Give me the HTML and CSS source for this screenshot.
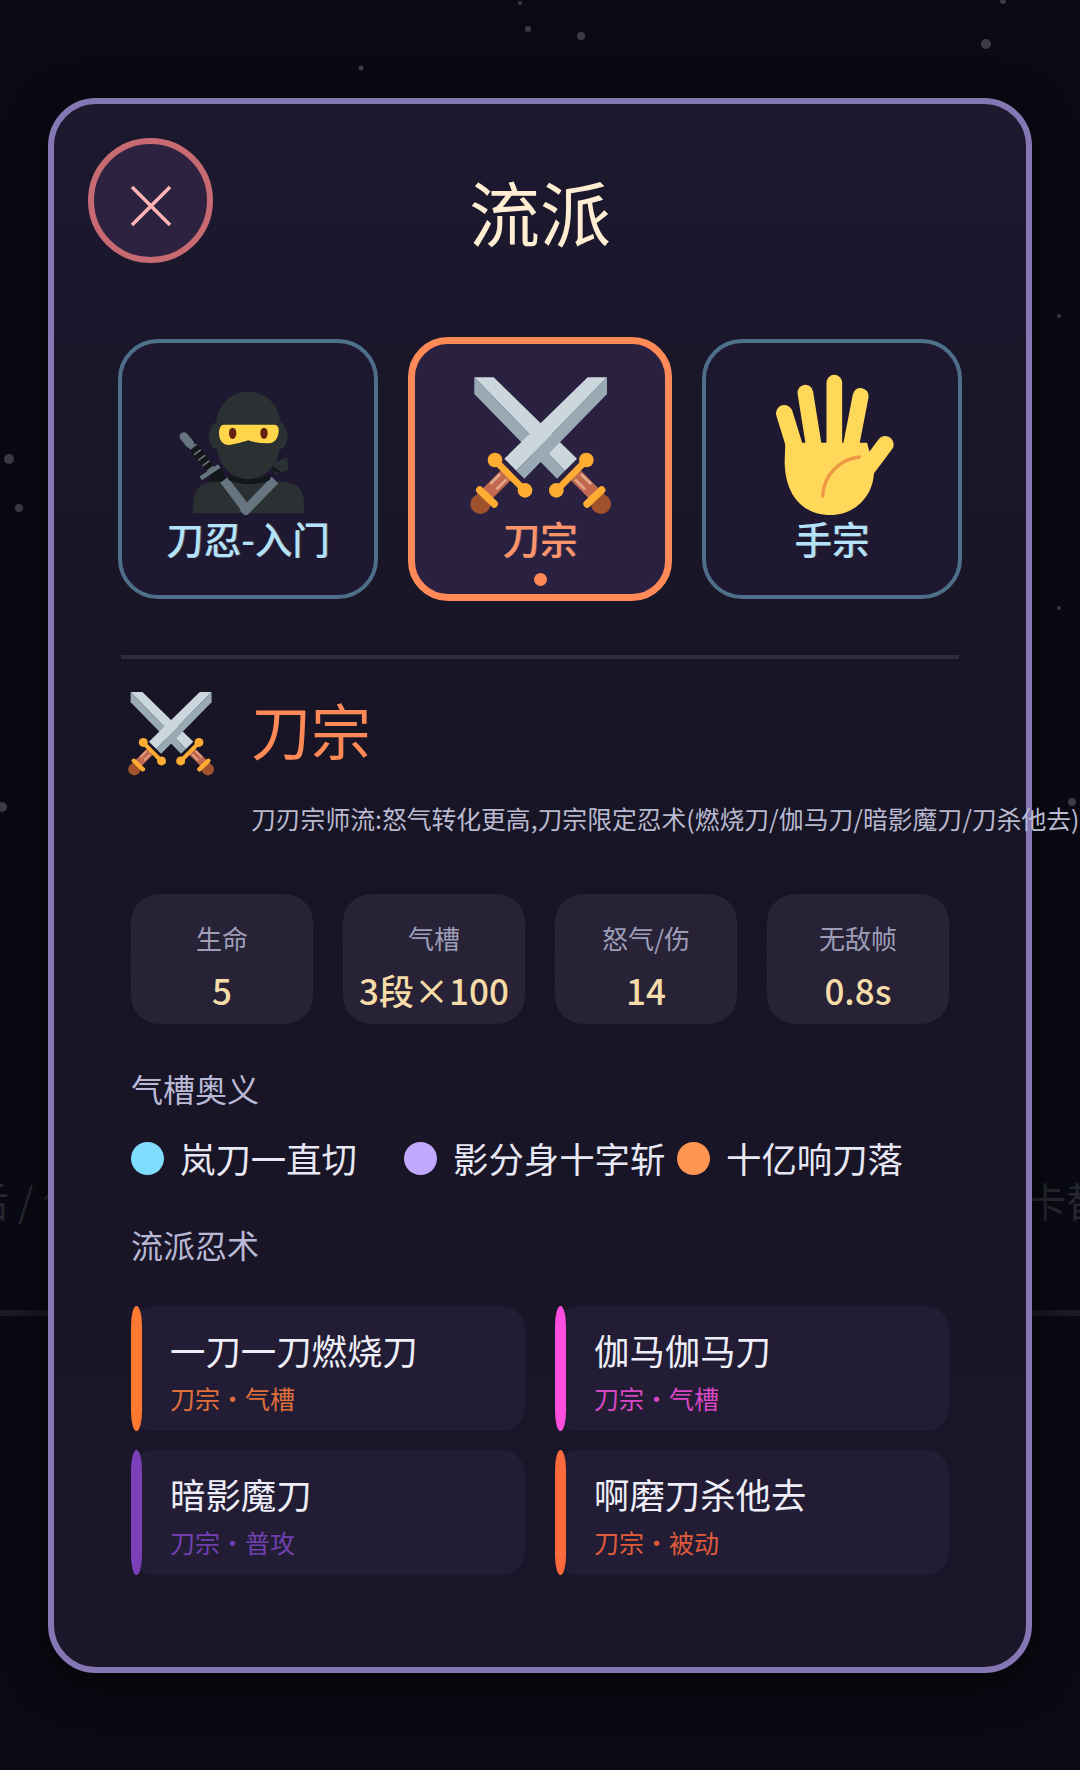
FILE: index.html
```html
<!DOCTYPE html>
<html lang="zh-CN">
<head>
    <meta charset="UTF-8">
    <meta name="viewport" content="width=device-width, initial-scale=1.0">
    <title>流派</title>
    <link rel="stylesheet" href="styles.css">
</head>
<body>
    <svg class="defs" width="0" height="0">
        <symbol id="swords" viewBox="57 42 423 423">
            <g id="sword">
                <path d="M70 52H128L378 296L342 332Z" fill="#ccd6dd"/>
                <path d="M70 52V102L318 356L342 332Z" fill="#99aab5"/>
                <path d="M366 338L446 418" stroke="#c1694f" stroke-width="42"/>
                <path d="M390 342L420 372M372 358L402 388" stroke="#e3a78c" stroke-width="8"/>
                <circle cx="450" cy="432" r="30" fill="#a0522d"/>
                <path d="M408 432L452 390" stroke="#ffac33" stroke-width="22" stroke-linecap="round"/>
                <path d="M318 390L405 302" stroke="#ffac33" stroke-width="20"/>
                <circle cx="316" cy="391" r="22" fill="#ffac33"/>
                <circle cx="406" cy="300" r="22" fill="#ffac33"/>
            </g>
            <use href="#sword" transform="translate(538 0) scale(-1 1)"/>
        </symbol>
    </svg>

    <svg class="stars" viewBox="0 0 1080 1770">
        <circle cx="520" cy="3" r="2"/>
        <circle cx="528" cy="29" r="3"/>
        <circle cx="581" cy="36" r="4"/>
        <circle cx="986" cy="44" r="5"/>
        <circle cx="1003" cy="1" r="3"/>
        <circle cx="361" cy="68" r="2.5"/>
        <circle cx="9" cy="459" r="5"/>
        <circle cx="19" cy="508" r="4"/>
        <circle cx="2" cy="807" r="5"/>
        <circle cx="1059" cy="316" r="2"/>
        <circle cx="1059" cy="608" r="2"/>
        <circle cx="1072" cy="802" r="4"/>
    </svg>

    <div class="ghost">
        <span class="ghost-left">后 / 气</span>
        <span>卡替</span>
    </div>
    <div class="ghost-line"></div>

    <section class="panel">
        <header class="panel-head">
            <button class="close">
                <svg width="44" height="44" viewBox="0 0 44 44">
                    <path d="M3 3L41 41M41 3L3 41" stroke="#ffb3b3" stroke-width="3.5" fill="none"/>
                </svg>
            </button>
            <h1>流派</h1>
        </header>

        <div class="tabs">
            <div class="tab">
                <svg class="tab-icon" viewBox="54 -18 423 423">
                    <path d="M90 188L168 288" stroke="#14171a" stroke-width="28"/>
                    <path d="M98 198L160 278" stroke="#66757f" stroke-width="26" stroke-dasharray="5 16"/>
                    <path d="M72 170L90 192" stroke="#66757f" stroke-width="26" stroke-linecap="round"/>
                    <path d="M122 295L178 258" stroke="#66757f" stroke-width="13"/>
                    <path d="M150 290L185 262L200 310L150 312Z" fill="#14171a"/>
                    <path d="M100 400V368Q100 305 170 305H362Q432 305 432 368V400Z" fill="#2b3033"/>
                    <path d="M192 300L262 392M345 300L248 400" stroke="#66757f" stroke-width="28"/>
                    <path d="M205 285Q265 310 330 285V300Q265 325 205 300Z" fill="#14171a"/>
                    <path d="M340 248L382 232L385 270L345 285Z" fill="#2b3033"/>
                    <path d="M335 262L360 278" stroke="#14171a" stroke-width="8"/>
                    <path d="M265 35C315 35 358 72 360 125C378 135 385 160 382 180C378 198 368 208 358 208C352 262 312 297 265 297C218 297 178 262 172 208C162 208 152 198 148 180C145 160 152 135 170 125C172 72 215 35 265 35Z" fill="#2b3033"/>
                    <path d="M192 134H342Q358 134 356 155Q352 190 322 190Q290 190 265 181Q240 190 208 195Q178 195 177 160Q177 134 192 134Z" fill="#ffd54a"/>
                    <ellipse cx="218" cy="160" rx="11" ry="17" fill="#662113"/>
                    <ellipse cx="312" cy="160" rx="11" ry="17" fill="#662113"/>
                </svg>
                <span class="tab-name">刀忍-入门</span>
            </div>
            <div class="tab active">
                <svg class="tab-icon"><use href="#swords"/></svg>
                <span class="tab-name">刀宗</span>
                <i class="tab-dot"></i>
            </div>
            <div class="tab">
                <svg class="tab-icon" viewBox="30 39 423 423">
                    <g stroke="#ffd85a" stroke-linecap="round" fill="none">
                        <path d="M97 157L132 270" stroke-width="50"/>
                        <path d="M160 95L188 270" stroke-width="47"/>
                        <path d="M247 65V270" stroke-width="47"/>
                        <path d="M326 105L294 270" stroke-width="48"/>
                        <path d="M400 250L340 330" stroke-width="50"/>
                    </g>
                    <path d="M100 245H345L366 320C370 400 312 462 235 462C150 462 98 400 98 300Z" fill="#ffd85a"/>
                    <path d="M212 405C215 345 260 295 322 288" stroke="#ef9645" stroke-width="10" stroke-linecap="round" fill="none"/>
                </svg>
                <span class="tab-name">手宗</span>
            </div>
        </div>

        <hr class="divider">

        <div class="detail">
            <div class="detail-head">
                <svg class="detail-icon"><use href="#swords"/></svg>
                <div class="detail-text">
                    <h2>刀宗</h2>
                    <p>刀刃宗师流:怒气转化更高,刀宗限定忍术(燃烧刀/伽马刀/暗影魔刀/刀杀他去)</p>
                </div>
            </div>

            <div class="stats">
                <div class="stat"><span class="stat-label">生命</span><span class="stat-value">5</span></div>
                <div class="stat"><span class="stat-label">气槽</span><span class="stat-value">3段×100</span></div>
                <div class="stat"><span class="stat-label">怒气/伤</span><span class="stat-value">14</span></div>
                <div class="stat"><span class="stat-label">无敌帧</span><span class="stat-value">0.8s</span></div>
            </div>

            <h3 class="section-title">气槽奥义</h3>
            <div class="arts">
                <div class="art"><i class="orb orb-blue"></i>岚刀一直切</div>
                <div class="art"><i class="orb orb-purple"></i>影分身十字斩</div>
                <div class="art"><i class="orb orb-orange"></i>十亿响刀落</div>
            </div>

            <h3 class="section-title skills-title">流派忍术</h3>
            <div class="skills">
                <div class="skill skill-orange">
                    <div class="skill-name">一刀一刀燃烧刀</div>
                    <div class="skill-tag">刀宗·气槽</div>
                </div>
                <div class="skill skill-pink">
                    <div class="skill-name">伽马伽马刀</div>
                    <div class="skill-tag">刀宗·气槽</div>
                </div>
                <div class="skill skill-violet">
                    <div class="skill-name">暗影魔刀</div>
                    <div class="skill-tag">刀宗·普攻</div>
                </div>
                <div class="skill skill-red">
                    <div class="skill-name">啊磨刀杀他去</div>
                    <div class="skill-tag">刀宗·被动</div>
                </div>
            </div>
        </div>
    </section>
</body>
</html>
```

FILE: styles.css
```css
* {
    box-sizing: border-box;
}

html, body {
    height: 100%;
}

body {
    margin: 0;
    padding-top: 98px;
    position: relative;
    overflow: hidden;
    background-color: #0a0a14;
    font-family: "Noto Sans CJK SC", "Noto Sans", sans-serif;
}

.defs {
    position: absolute;
}

.stars {
    position: absolute;
    top: 0;
    left: 0;
    width: 1080px;
    height: 1770px;
    fill: #3c3c46;
}

.ghost {
    position: absolute;
    top: 1175px;
    left: -31px;
    right: -26px;
    display: flex;
    justify-content: space-between;
    font-size: 40px;
    line-height: 50px;
    color: rgba(255, 255, 255, 0.12);
}

.ghost-left {
    white-space: pre;
}

.ghost-line {
    position: absolute;
    top: 1310px;
    left: 0;
    right: 0;
    height: 6px;
    background-color: #1b1a25;
}

.panel {
    position: relative;
    height: 1575px;
    margin: 0 48px;
    padding: 34px;
    background: linear-gradient(180deg, #1c182e, #171424 50%, #1b172b);
    border: 6px solid #8577b3;
    border-radius: 48px;
    box-shadow: 0 10px 40px rgba(0, 0, 0, 0.7);
}

/* header */
.panel-head {
    display: grid;
    grid-template-columns: 125px 1fr 125px;
    height: 125px;
}

.close {
    display: flex;
    align-items: center;
    justify-content: center;
    width: 125px;
    height: 125px;
    padding: 10px 0 0;
    background-color: #2d2340;
    border: 6px solid #c76a72;
    border-radius: 50%;
}

.panel-head h1 {
    grid-column: 2;
    margin: 0;
    font-size: 71px;
    font-weight: 400;
    line-height: 144px;
    text-align: center;
    color: #ffeed2;
}

/* tabs */
.tabs {
    display: flex;
    align-items: center;
    gap: 30px;
    margin: 76px 30px 0;
}

.tab {
    position: relative;
    display: flex;
    flex-direction: column;
    align-items: center;
    width: 260px;
    height: 260px;
    padding-top: 31px;
    background-color: #1e1830;
    border: 4px solid #4f708a;
    border-radius: 40px;
}

.tab.active {
    width: 264px;
    height: 264px;
    margin: -2px 0;
    padding-top: 30px;
    background-color: #2a2040;
    border: 7px solid #ff8a57;
}

.tab-icon {
    width: 141px;
    height: 141px;
    flex-shrink: 0;
}

.tab-name {
    margin-top: -2px;
    font-size: 37.5px;
    font-weight: 500;
    line-height: 50px;
    white-space: nowrap;
    color: #b4e2f8;
    text-shadow: 1px 0 0 rgba(255, 255, 255, 0.25);
}

.active .tab-name {
    color: #ff9468;
}

.tab-dot {
    position: absolute;
    left: 50%;
    bottom: 8px;
    width: 13px;
    height: 13px;
    margin-left: -6.5px;
    background-color: #ff8a57;
    border-radius: 50%;
}

.divider {
    height: 4px;
    margin: 56px 33px 0;
    background-color: #2f2b42;
    border: 0;
}

/* detail */
.detail {
    padding: 0 43px;
}

.detail-head {
    display: flex;
    gap: 37px;
    margin: 31px 0 0 -3px;
}

.detail-icon {
    width: 86px;
    height: 86px;
    flex-shrink: 0;
}

.detail-text h2 {
    margin: -1px 0 0;
    font-size: 60px;
    font-weight: 400;
    line-height: 80px;
    color: #ff8a57;
}

.detail-text p {
    position: relative;
    margin: 31px 0 0;
    font-size: 24.8px;
    line-height: 36px;
    white-space: nowrap;
    color: #b9b9cf;
}

.stats {
    display: grid;
    grid-template-columns: repeat(4, 1fr);
    gap: 30px;
    margin-top: 58px;
}

.stat {
    display: flex;
    flex-direction: column;
    align-items: center;
    height: 130px;
    padding-top: 26px;
    background-color: #272236;
    border-radius: 28px;
}

.stat-label {
    font-size: 26px;
    line-height: 36px;
    color: #9d9db8;
}

.stat-value {
    margin-top: 10px;
    font-size: 35px;
    font-weight: 500;
    line-height: 48px;
    color: #f5dca8;
}

.section-title {
    margin: 44px 0 0;
    font-size: 32px;
    font-weight: 400;
    line-height: 40px;
    color: #b9b9d6;
}

.arts {
    display: grid;
    grid-template-columns: repeat(3, 273px);
    margin-top: 28px;
}

.art {
    display: flex;
    align-items: center;
    gap: 16px;
    font-size: 35.4px;
    line-height: 44px;
    white-space: nowrap;
    color: #e8e8f5;
}

.orb {
    width: 33px;
    height: 33px;
    border-radius: 50%;
}

.orb-blue {
    background-color: #7fdcff;
}

.orb-purple {
    background-color: #c3a8ff;
}

.orb-orange {
    background-color: #ff9550;
}

.skills-title {
    margin-top: 44px;
}

.skills {
    display: grid;
    grid-template-columns: repeat(2, 1fr);
    gap: 19px 30px;
    margin-top: 42px;
}

.skill {
    position: relative;
    height: 125px;
    padding: 22px 0 0 39px;
    background-color: #221d35;
    border-radius: 24px;
}

/* accent bar, pointed at both ends */
.skill::before {
    content: "";
    position: absolute;
    top: 0;
    bottom: 0;
    left: 0;
    width: 11px;
    border-radius: 50% / 20px;
    background-color: var(--accent);
}

.skill-name {
    font-size: 35.4px;
    line-height: 44px;
    color: #eeeef8;
}

.skill-tag {
    margin-top: 9px;
    font-size: 25px;
    line-height: 34px;
}

.skill-orange {
    --accent: #ff7a30;
}

.skill-orange .skill-tag {
    color: #e0703a;
}

.skill-pink {
    --accent: #ff4fe0;
}

.skill-pink .skill-tag {
    color: #d848c4;
}

.skill-violet {
    --accent: #7b3fb8;
}

.skill-violet .skill-tag {
    color: #7040b0;
}

.skill-red {
    --accent: #ff6a3c;
}

.skill-red .skill-tag {
    color: #e05a3c;
}
```
